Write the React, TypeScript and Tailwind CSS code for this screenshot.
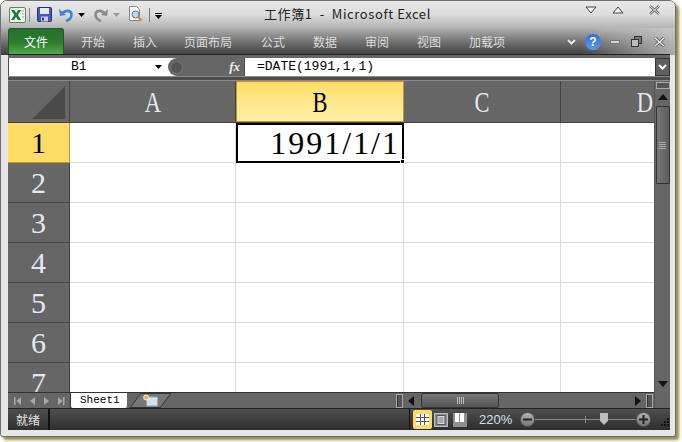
import React from "react";

const cjk = "font-['Noto_Sans_CJK_SC','Noto_Sans',sans-serif]";
const serif = "font-['Liberation_Serif',serif]";
const mono = "font-['Liberation_Mono',monospace]";

const tabs: [string, string][] = [
  ["开始", "w-[58px]"],
  ["插入", "w-[46px]"],
  ["页面布局", "w-[80px]"],
  ["公式", "w-[50px]"],
  ["数据", "w-[54px]"],
  ["审阅", "w-[50px]"],
  ["视图", "w-[54px]"],
  ["加载项", "w-[62px]"],
];

const columns = [
  { name: "A", width: "w-[166px]" },
  { name: "B", width: "w-[168px]", active: true },
  { name: "C", width: "w-[157px]" },
  { name: "D", width: "w-[168px]" },
];

const rows = [1, 2, 3, 4, 5, 6, 7];

const ExcelIcon = () => (
  <svg width="17" height="16" viewBox="0 0 17 16">
    <rect x="0.5" y="0.5" width="16" height="15" rx="1.5" fill="#f2f6ea" stroke="#5d8552" />
    <path d="M2 3h3.400L7.200 6.200 9 3h3L8.900 8l3.300 5H8.900L7 9.700 5.100 13H2l3.400-5z" fill="#1f7a35" />
    <path d="M12 4h3M13 7h2M13 10h2" stroke="#8fb98e" />
  </svg>
);

const SaveIcon = () => (
  <svg width="15" height="15" viewBox="0 0 15 15">
    <rect x="0.5" y="0.5" width="14" height="14" rx="1" fill="#4a56b8" stroke="#262f80" />
    <rect x="3" y="1" width="9" height="6" fill="#e6e9f6" />
    <rect x="4" y="9.500" width="7" height="5" fill="#c9cbe0" />
    <rect x="5" y="10.500" width="2" height="3" fill="#3a4390" />
  </svg>
);

const UndoIcon = ({ color, flip }: { color: string; flip?: boolean }) => (
  <svg width="14" height="14" viewBox="0 0 14 14" className={flip ? "-scale-x-100" : ""}>
    <path d="M0 1l1 7 6-1z" fill={color} />
    <path d="M3 6C6 1.500 12.500 2 12.500 6.500 12.500 9.500 10 12 7 13" stroke={color} strokeWidth="2.600" fill="none" />
  </svg>
);

const PreviewIcon = () => (
  <svg width="15" height="17" viewBox="0 0 15 17">
    <path d="M1.500.5h7l3 3v11h-10z" fill="#fafafa" stroke="#7a8796" />
    <circle cx="7.500" cy="8.500" r="3.500" fill="#bcd8ef" stroke="#5d7487" />
    <path d="M10 11l3.500 3.500" stroke="#d0902a" strokeWidth="2.200" />
  </svg>
);

const Caret = ({ color = "#000" }: { color?: string }) => (
  <svg width="7" height="4" viewBox="0 0 7 4">
    <path d="M0 0h7L3.500 4z" fill={color} />
  </svg>
);

const ChevronBold = ({ color = "#fff" }: { color?: string }) => (
  <svg width="9" height="6" viewBox="0 0 9 6">
    <path d="M1 1l3.500 3.500L8 1" stroke={color} strokeWidth="2" fill="none" />
  </svg>
);

const Triangle = ({ dir, color = "#111" }: { dir: "up" | "down" | "left" | "right"; color?: string }) => {
  const d = {
    up: "M0 7L5 1l5 6z",
    down: "M0 2h10L5 8z",
    left: "M7 0v10L1 5z",
    right: "M2 0v10l6-5z",
  }[dir];
  return (
    <svg width="10" height="10" viewBox="0 0 10 10">
      <path d={d} fill={color} />
    </svg>
  );
};

const SheetNav = () => (
  <svg width="52" height="10" viewBox="0 0 52 10" className="ml-[6px]">
    <g fill="#a9a9a9">
      <rect x="0" y="1" width="1.500" height="8" />
      <path d="M7 1v8L2.500 5z" />
      <path d="M21 1v8l-5-4z" />
      <path d="M30 1v8l5-4z" />
      <path d="M44 1v8l4.500-4z" />
      <rect x="49" y="1" width="1.500" height="8" />
    </g>
  </svg>
);

const NewSheetIcon = () => (
  <svg width="16" height="14" viewBox="0 0 16 14">
    <rect x="4" y="3" width="11" height="9" rx="1" fill="#d5e2ee" stroke="#8fa5b8" />
    <circle cx="3.500" cy="3.500" r="2.500" fill="#f2b13a" stroke="#fff" strokeWidth="0.800" />
  </svg>
);

const Splitter = () => (
  <div className="w-[7px] h-[14px] shrink-0 border border-[#a8a8a8] bg-[#555] shadow-[inset_1px_0_0_#333]" />
);

const ViewNormal = () => (
  <svg width="13" height="11" viewBox="0 0 13 11">
    <rect x="0" y="0" width="13" height="11" fill="#fff" />
    <path d="M0 3.500h13M0 7.500h13M4.500 0v11M8.500 0v11" stroke="#555" />
  </svg>
);

const ViewPage = () => (
  <svg width="14" height="14" viewBox="0 0 14 14">
    <rect x="0.500" y="0.500" width="13" height="13" fill="#8f8f8f" stroke="#bdbdbd" />
    <rect x="3" y="2.500" width="8" height="9" fill="#d9d9d9" stroke="#555" />
    <path d="M4.500 5h5M4.500 7h5M4.500 9h5" stroke="#777" />
  </svg>
);

const ViewBreak = () => (
  <svg width="14" height="14" viewBox="0 0 14 14">
    <rect x="0" y="0" width="14" height="14" fill="#8f8f8f" />
    <rect x="2" y="0" width="4" height="9" fill="#fff" />
    <rect x="7" y="0" width="4" height="9" fill="#fff" />
  </svg>
);

const ZoomButton = ({ plus }: { plus?: boolean }) => (
  <div className="w-[15px] h-[15px] rounded-full bg-gradient-to-b from-[#b5b5b5] to-[#777] border border-[#555] flex items-center justify-center shrink-0">
    <svg width="9" height="9" viewBox="0 0 9 9">
      <path d={plus ? "M0 4.500h9M4.500 0v9" : "M0 4.500h9"} stroke="#222" strokeWidth="2" />
    </svg>
  </div>
);

const Grip = () => (
  <svg width="10" height="11" viewBox="0 0 10 11" className="ml-[8px] mt-auto mb-[1px]">
    <g fill="#111">
      <rect x="8" y="0" width="2" height="2" />
      <rect x="5" y="3" width="2" height="2" />
      <rect x="8" y="3" width="2" height="2" />
      <rect x="2" y="6" width="2" height="2" />
      <rect x="5" y="6" width="2" height="2" />
      <rect x="8" y="6" width="2" height="2" />
    </g>
  </svg>
);

export default function App() {
  return (
    <div className={`w-[682px] h-[442px] bg-white overflow-hidden ${cjk}`}>
      <div className="w-[676px] h-[437px] rounded-t-[7px] rounded-b-[3px] bg-[#e6e6e6] border border-[#6f6f6f] shadow-[3px_3px_3px_rgba(120,110,30,0.8)] flex flex-col overflow-hidden">
        {/* Title bar */}
        <div className="h-[27px] shrink-0 flex items-center pl-[8px] pr-[10px] bg-gradient-to-b from-[#e9e9e9] via-[#dcdcdc] to-[#b4b4b4]">
          <ExcelIcon />
          <div className="w-px h-[14px] bg-[#888] ml-[3px] mr-[7px]" />
          <SaveIcon />
          <div className="ml-[7px]"><UndoIcon color="#3f86d0" /></div>
          <div className="ml-[5px] mr-[9px]"><Caret /></div>
          <UndoIcon color="#8b8b8b" flip />
          <div className="ml-[5px] mr-[8px]"><Caret color="#9a9a9a" /></div>
          <PreviewIcon />
          <div className="w-px h-[14px] bg-[#777] ml-[6px] mr-[5px]" />
          <div className="flex flex-col items-center gap-[1px] mt-[3px]">
            <div className="w-[7px] h-px bg-black" />
            <Caret />
          </div>
          <span className="ml-[102px] text-[13px] tracking-[0.6px] text-[#222] leading-none whitespace-pre mt-[-2px]">工作簿1  -  Microsoft Excel</span>
          <div className="ml-auto flex items-center mt-[-9px] mr-[5px]">
            <svg width="12" height="8" viewBox="0 0 12 8"><path d="M1 1h10L6 7z" fill="#f2f2f2" stroke="#444" /></svg>
            <svg width="12" height="8" viewBox="0 0 12 8" className="ml-[15px]"><path d="M1 7h10L6 1z" fill="#f2f2f2" stroke="#444" /></svg>
            <svg width="11" height="10" viewBox="0 0 11 10" className="ml-[25px]"><path d="M1 1l9 8M10 1L1 9" stroke="#666" strokeWidth="2.400" /><path d="M1 1l9 8M10 1L1 9" stroke="#f4f4f4" strokeWidth="0.900" /></svg>
          </div>
        </div>

        {/* Ribbon tabs */}
        <div className="h-[27px] shrink-0 flex items-end pl-[7px] pr-[10px] bg-[linear-gradient(to_right,transparent_86%,rgba(205,205,205,0.75)),linear-gradient(to_bottom,#b0b0b0,#6d6d6d_55%,#3f3f3f)]">
          <div className="w-[56px] h-[27px] shrink-0 rounded-t-[3px] bg-gradient-to-b from-[#25702b] via-[#2c7c30] to-[#55ac4a] border border-[#1e5a25] border-b-0 flex items-center justify-center text-white text-[12px]">
            文件
          </div>
          <div className="flex h-[27px] items-center">
            {tabs.map(([label, width]) => (
              <div key={label} className={`${width} text-center text-[12px] text-[#dcdcdc]`}>{label}</div>
            ))}
          </div>
          <div className="ml-auto h-[27px] flex items-center">
            <ChevronBold color="#e4e4e4" />
            <div className="ml-[9px] w-[16px] h-[16px] rounded-full bg-gradient-to-b from-[#2f6fd0] to-[#5d9ae6] flex items-center justify-center text-white text-[12px] font-bold font-['Liberation_Sans',sans-serif]">?</div>
            <div className="ml-[9px] w-[10px] h-[4px] bg-[#d5d5d5] border border-[#777]" />
            <svg width="11" height="11" viewBox="0 0 11 11" className="ml-[11px]">
              <rect x="3.500" y="0.500" width="7" height="7" fill="#7a7a7a" stroke="#333" />
              <rect x="0.500" y="3.500" width="7" height="7" fill="#bbb" stroke="#333" />
            </svg>
            <svg width="11" height="10" viewBox="0 0 11 10" className="ml-[12px]"><path d="M1 1l9 8M10 1L1 9" stroke="#555" strokeWidth="3" /><path d="M1 1l9 8M10 1L1 9" stroke="#eee" strokeWidth="1.400" /></svg>
          </div>
        </div>

        {/* Main area */}
        <div className="flex-1 min-h-0 ml-[7px] mr-[5px] mb-[6px] flex flex-col bg-[#666] shadow-[0_-1px_0_#222]">
          {/* Formula bar */}
          <div className="h-[18px] shrink-0 flex items-stretch mt-[3px] pl-px bg-[#4d4d4d]">
            <div className="flex bg-white shrink-0">
              <div className={`w-[159px] flex items-center ${mono} text-[13px] text-black pl-[62px]`}>
                B1
                <div className="ml-auto mr-[6px]"><Caret /></div>
              </div>
              <div className="w-[76px] bg-[#666] rounded-l-[9px] flex items-center pl-[2px] pr-[4px]">
                <div className="w-[13px] h-[13px] rounded-full bg-[#555] border border-[#777]" />
                <span className={`ml-auto ${serif} italic font-bold text-[13px] text-[#eee]`}>fx</span>
              </div>
            </div>
            <div className={`flex-1 bg-white ${mono} text-[13px] text-black pl-[12px] flex items-center ml-[1px]`}>=DATE(1991,1,1)</div>
            <div className="w-[15px] bg-[#606060] border border-[#333] flex items-center justify-center">
              <ChevronBold />
            </div>
          </div>
          <div className="h-[5px] shrink-0 bg-[#4d4d4d] border-y border-[#8a8a8a]" />

          <div className="flex-1 min-h-0 flex">
            <div className="w-[646px] flex flex-col shrink-0">
              {/* Grid */}
              <div className="flex-1 min-h-0 overflow-hidden">
                <div className="flex h-[42px] bg-[#666] border-b border-[#444]">
                  <div className="w-[62px] shrink-0 border-r border-[#444] flex items-end justify-end pr-[4px] pb-[3px]">
                    <svg width="33" height="33" viewBox="0 0 33 33"><path d="M33 0v33H0z" fill="#4a4a4a" /></svg>
                  </div>
                  {columns.map((c) => (
                    <div
                      key={c.name}
                      className={`${c.width} shrink-0 flex items-center justify-center ${serif} text-[30px] leading-none ${
                        c.active
                          ? "bg-gradient-to-b from-[#ffdc66] to-[#fff2a8] text-black border border-[#c8912b]"
                          : "text-[#e4e8ee] border-r border-[#444]"
                      }`}
                    >
                      <span className="scale-x-[0.75]">{c.name}</span>
                    </div>
                  ))}
                </div>
                {rows.map((r) => (
                  <div key={r} className="flex h-[40px]">
                    <div
                      className={`w-[62px] shrink-0 flex items-center justify-center ${serif} text-[30px] leading-none border-b border-r ${
                        r === 1
                          ? "bg-[#ffdc66] text-black border-[#c8912b]"
                          : "bg-[#666] text-[#e4e8ee] border-[#444]"
                      }`}
                    >
                      {r}
                    </div>
                    {columns.map((c) =>
                      r === 1 && c.active ? (
                        <div
                          key={c.name}
                          className={`${c.width} shrink-0 relative border-2 border-black bg-white ${serif} text-[32px] tracking-[2px] leading-none text-black flex items-center justify-end pr-[2px]`}
                        >
                          1991/1/1
                          <div className="absolute -right-[3px] -bottom-[3px] w-[5px] h-[5px] bg-black border border-white" />
                        </div>
                      ) : (
                        <div key={c.name} className={`${c.width} shrink-0 bg-white border-r border-b border-[#d8d8d8]`} />
                      ),
                    )}
                  </div>
                ))}
              </div>

              {/* Sheet tabs + horizontal scrollbar */}
              <div className="h-[16px] shrink-0 flex items-center bg-[#666] border-t border-[#333]">
                <div className="w-[63px] h-full shrink-0 flex items-center border-r border-[#333]"><SheetNav /></div>
                <div className="w-[325px] h-full shrink-0 flex items-center">
                  <div className={`w-[56px] h-full bg-white ${mono} text-[11px] text-black flex items-center pl-[9px] leading-none rounded-b-[2px]`}>Sheet1</div>
                  <div className="w-[31px] h-full ml-[8px] flex items-center justify-center bg-[#777] skew-x-[-37deg] border border-[#333]">
                    <div className="skew-x-[37deg]"><NewSheetIcon /></div>
                  </div>
                </div>
                <Splitter />
                <div className="ml-[2px] w-[14px] flex justify-center"><Triangle dir="left" /></div>
                <div className="ml-[2px] w-[78px] h-full rounded-[2px] border border-[#333] bg-gradient-to-b from-[#777] to-[#555] flex items-center justify-center gap-[1px]">
                  <span className="w-px h-[7px] bg-[#bbb]" />
                  <span className="w-px h-[7px] bg-[#bbb]" />
                  <span className="w-px h-[7px] bg-[#bbb]" />
                  <span className="w-px h-[7px] bg-[#bbb]" />
                </div>
                <div className="ml-auto w-[14px] flex justify-center"><Triangle dir="right" /></div>
                <div className="ml-px mr-px"><Splitter /></div>
              </div>
            </div>

            {/* Vertical scrollbar */}
            <div className="flex-1 flex flex-col items-center border-l border-[#555] bg-[#666]">
              <div className="w-[14px] h-[7px] mt-px border border-[#a8a8a8] bg-[#555]" />
              <div className="h-[17px] flex items-center justify-center"><Triangle dir="up" /></div>
              <div className="w-[14px] h-[78px] rounded-[1px] border border-[#333] bg-gradient-to-r from-[#777] to-[#5c5c5c] flex flex-col items-center justify-center gap-[1px]">
                <span className="w-[7px] h-px bg-[#aaa]" />
                <span className="w-[7px] h-px bg-[#aaa]" />
                <span className="w-[7px] h-px bg-[#aaa]" />
                <span className="w-[7px] h-px bg-[#aaa]" />
              </div>
              <div className="mt-auto h-[12px] mb-[18px] flex items-center justify-center"><Triangle dir="down" /></div>
            </div>
          </div>

          {/* Status bar */}
          <div className="h-[22px] shrink-0 flex items-center bg-gradient-to-b from-[#4f4f4f] to-[#2e2e2e] border-t border-[#222]">
            <div className="w-[42px] h-full flex items-center pl-[8px] text-[12px] text-[#e6e6e6] border-r-2 border-[#111]">就绪</div>
            <div className="ml-[359px] w-px h-full bg-[#111]" />
            <div className="ml-[3px] w-[19px] h-[19px] bg-[#ffd966] rounded-[2px] flex items-center justify-center"><ViewNormal /></div>
            <div className="ml-[2px]"><ViewPage /></div>
            <div className="ml-[5px]"><ViewBreak /></div>
            <span className="ml-[12px] w-[32px] text-[13px] text-[#cfe0f0] font-['Liberation_Sans',sans-serif]">220%</span>
            <div className="ml-[9px]"><ZoomButton /></div>
            <div className="w-[101px] h-px bg-[#888] relative">
              <div className="absolute left-[50px] -top-[3px] w-px h-[7px] bg-[#888]" />
              <div className="absolute left-[65px] -top-[6px] w-[8px] h-[12px] bg-[#bdbdbd] [clip-path:polygon(0_0,100%_0,100%_65%,50%_100%,0_65%)]" />
            </div>
            <ZoomButton plus />
            <Grip />
          </div>
        </div>
      </div>
    </div>
  );
}
